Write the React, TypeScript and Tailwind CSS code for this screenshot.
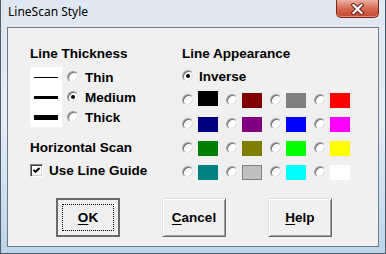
import React from 'react';

const SANS = "font-['Liberation_Sans',Arial,sans-serif]";

function Radio({ checked = false }: { checked?: boolean }) {
  return (
    <span className="flex items-center justify-center w-[12px] h-[12px] shrink-0 rounded-full bg-white border border-t-[#a0a0a0] border-l-[#a0a0a0] border-r-[#f4f4f4] border-b-[#f4f4f4] shadow-[inset_1px_1px_0_#6e6e6e,inset_-1px_-1px_0_#dcdcdc]">
      {checked && <span className="w-[4px] h-[4px] rounded-full bg-black" />}
    </span>
  );
}

function Checkbox() {
  return (
    <span className="flex items-center justify-center w-[13px] h-[13px] shrink-0 bg-white border border-t-[#808080] border-l-[#808080] border-r-white border-b-white shadow-[inset_1px_1px_0_#404040,inset_-1px_-1px_0_#d4d0c8]">
      <svg width="9" height="9" viewBox="0 0 9 9">
        <path d="M1.5 4 L3.5 6 L7.5 2" stroke="#000" strokeWidth="1.8" fill="none" />
      </svg>
    </span>
  );
}

const colors = [
  '#000000', '#800000', '#808080', '#ff0000',
  '#000080', '#800080', '#0000ff', '#ff00ff',
  '#008000', '#808000', '#00ff00', '#ffff00',
  '#008080', '#c0c0c0', '#00ffff', '#ffffff',
];

const swatchClass: Record<string, string> = {
  '#000000': 'bg-[#000000] mb-[4px]',
  '#800000': 'bg-[#800000]',
  '#808080': 'bg-[#808080]',
  '#ff0000': 'bg-[#ff0000]',
  '#000080': 'bg-[#000080]',
  '#800080': 'bg-[#800080]',
  '#0000ff': 'bg-[#0000ff]',
  '#ff00ff': 'bg-[#ff00ff]',
  '#008000': 'bg-[#008000]',
  '#808000': 'bg-[#808000]',
  '#00ff00': 'bg-[#00ff00]',
  '#ffff00': 'bg-[#ffff00]',
  '#008080': 'bg-[#008080]',
  '#c0c0c0': 'bg-[#c0c0c0] border border-[#808080]',
  '#00ffff': 'bg-[#00ffff]',
  '#ffffff': 'bg-[#ffffff]',
};

const thickness = [
  { label: 'Thin', h: 'h-[1px]', checked: false },
  { label: 'Medium', h: 'h-[3px]', checked: true },
  { label: 'Thick', h: 'h-[5px]', checked: false },
];

function DialogButton({ label, def = false }: { label: string; def?: boolean }) {
  const first = label[0];
  const rest = label.slice(1);
  const text = (
    <span className="text-[13.5px] font-bold leading-[15px]">
      <span className="underline underline-offset-[2px]">{first}</span>
      {rest}
    </span>
  );
  if (def) {
    return (
      <div className="flex w-[64px] h-[39px] p-[4px] bg-[#f0f0f0] border-2 border-[#6a6a6a]">
        <div className="flex flex-1 items-center justify-center border border-dotted border-black">{text}</div>
      </div>
    );
  }
  return (
    <div className="flex items-center justify-center w-[64px] h-[39px] bg-[#f0f0f0] border border-t-[#e3e3e3] border-l-[#e3e3e3] border-r-[#696969] border-b-[#696969] shadow-[inset_1px_1px_0_#fff,inset_-1px_-1px_0_#a0a0a0]">
      {text}
    </div>
  );
}

export default function App() {
  return (
    <div className="flex flex-col w-[386px] h-[254px] bg-gradient-to-b from-[#dfe8f2] via-[#e4ecf4] to-[#bcd4ea] border-x border-b border-[#4e5d6c] overflow-hidden">
      {/* Title bar */}
      <div className="flex justify-between h-[27px] shrink-0">
        <span className="pl-[7px] pt-[4px] text-[12px] leading-[16px] text-black font-['Noto_Sans',sans-serif]">
          LineScan Style
        </span>
        <div className="flex items-center justify-center w-[43px] h-[18px] mr-[6px] rounded-b-[5px] border border-t-0 border-[#7a2a1c] bg-gradient-to-b from-[#eab0a2] via-[#d66a52] to-[#c4452c] shadow-[inset_0_-1px_0_#e88a70]">
          <svg width="15" height="12" viewBox="0 0 15 12">
            <path d="M3.5 2 L11.5 10 M11.5 2 L3.5 10" stroke="#5a1c12" strokeWidth="4" strokeLinecap="square" />
            <path d="M3.5 2 L11.5 10 M11.5 2 L3.5 10" stroke="#fff" strokeWidth="2.2" strokeLinecap="square" />
          </svg>
        </div>
      </div>

      {/* Client area */}
      <div className={`flex flex-col mx-[6px] h-[220px] bg-[#f0f0f0] border border-[#6b7c8e] text-black ${SANS}`}>
        <div className="flex pt-[18px] pl-[22px]">
          {/* Left column */}
          <div className="flex flex-col w-[152px]">
            <div className="text-[13.5px] font-bold leading-[15px]">Line Thickness</div>
            <div className="flex flex-col mt-[6px]">
              {thickness.map((t) => (
                <div key={t.label} className="flex items-center h-[20px]">
                  <div className="flex items-center justify-center w-[32px] h-full bg-white">
                    <div className={`w-[24px] bg-black ${t.h}`} />
                  </div>
                  <div className="ml-[5px]"><Radio checked={t.checked} /></div>
                  <span className="ml-[6px] text-[13.5px] font-bold leading-[15px]">{t.label}</span>
                </div>
              ))}
            </div>
            <div className="mt-[13px] text-[13.5px] font-bold leading-[15px]">Horizontal Scan</div>
            <div className="flex items-center mt-[8px] h-[15px]">
              <Checkbox />
              <span className="ml-[6px] text-[13.5px] font-bold leading-[15px]">Use Line Guide</span>
            </div>
          </div>

          {/* Right column */}
          <div className="flex flex-col">
            <div className="text-[13.5px] font-bold leading-[15px]">Line Appearance</div>
            <div className="flex items-center mt-[7px] h-[16px]">
              <Radio checked />
              <span className="ml-[5px] text-[13.5px] font-bold leading-[15px]">Inverse</span>
            </div>
            <div className="grid grid-cols-[44px_44px_44px_44px] mt-[4px]">
              {colors.map((c) => (
                <div key={c} className="flex items-center h-[24px]">
                  <Radio />
                  <div className={`ml-[4px] w-[20px] h-[15px] ${swatchClass[c]}`} />
                </div>
              ))}
            </div>
          </div>
        </div>

        {/* Buttons */}
        <div className="flex gap-[42px] pl-[48px] mt-[14px]">
          <DialogButton label="OK" def />
          <DialogButton label="Cancel" />
          <DialogButton label="Help" />
        </div>
      </div>
    </div>
  );
}
